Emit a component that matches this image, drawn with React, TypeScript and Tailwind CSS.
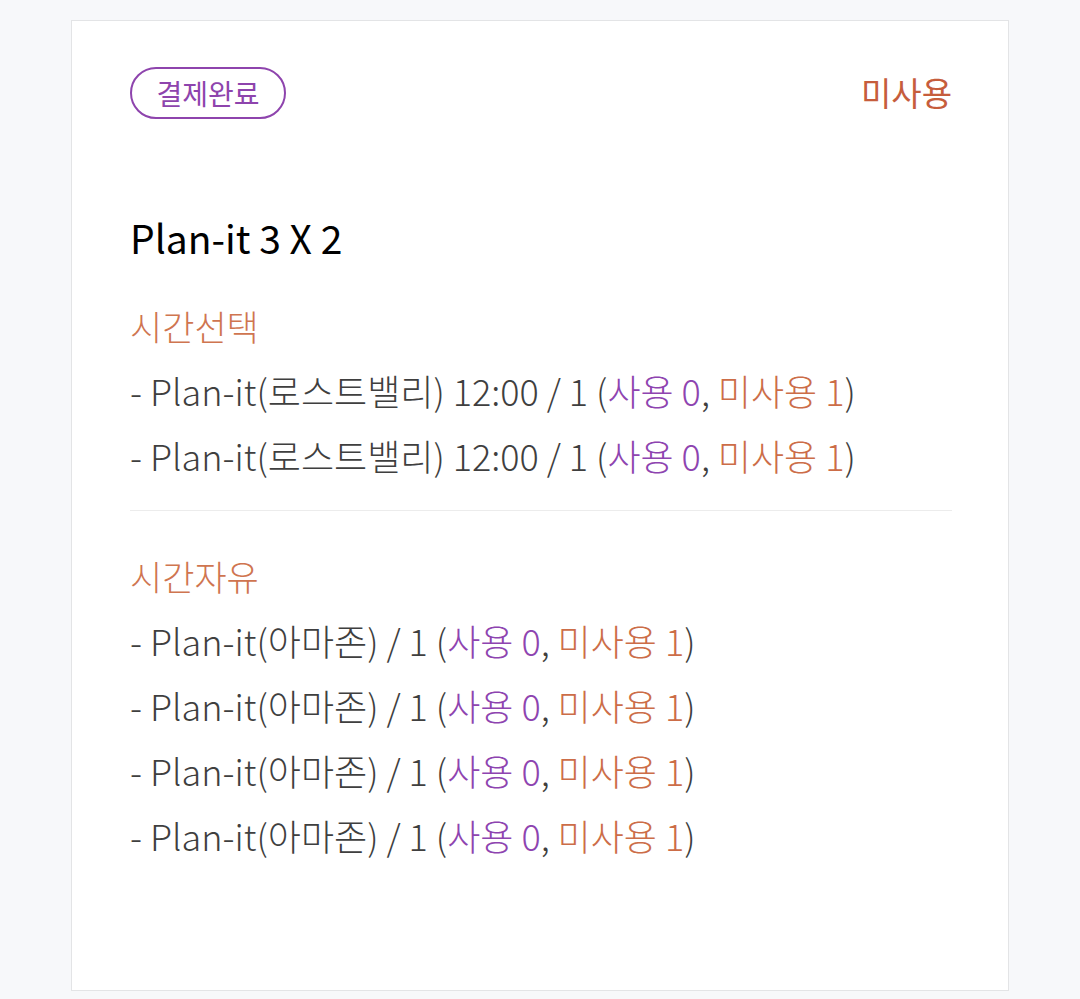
import React from "react";

type Item = { name: string; used: number; unused: number };

const font = { fontFamily: '"Noto Sans CJK KR", "Noto Sans", sans-serif' };

const timeSelect: Item[] = [
    { name: "- Plan-it(로스트밸리) 12:00 / 1", used: 0, unused: 1 },
    { name: "- Plan-it(로스트밸리) 12:00 / 1", used: 0, unused: 1 },
];

const timeFree: Item[] = [
    { name: "- Plan-it(아마존) / 1", used: 0, unused: 1 },
    { name: "- Plan-it(아마존) / 1", used: 0, unused: 1 },
    { name: "- Plan-it(아마존) / 1", used: 0, unused: 1 },
    { name: "- Plan-it(아마존) / 1", used: 0, unused: 1 },
];

const Line = ({ item }: { item: Item }) => (
    <div className="leading-[65px] text-[36px] font-light text-[#3f3f3f] whitespace-nowrap">
        {item.name} (<span className="text-[#8e44b0]">사용 {item.used}</span>,{" "}
        <span className="text-[#cc6d48]">미사용 {item.unused}</span>)
    </div>
);

const Section = ({ title, items }: { title: string; items: Item[] }) => (
    <div>
        <div className="leading-[65px] text-[35px] font-light text-[#cf7550]">{title}</div>
        {items.map((item, i) => (
            <Line item={item} key={i} />
        ))}
    </div>
);

export default function App() {
    return (
        <div className="min-h-[999px] bg-[#f7f8fa] pt-[20px]" style={font}>
            <div className="mx-auto w-[938px] bg-white border border-[#e3e4e6] pt-[46px] pb-[122px] pl-[58px] pr-[56px]">
                <div className="flex items-center justify-between h-[52px]">
                    <div className="h-[52px] w-[156px] rounded-full border-2 border-[#8e44ad] flex items-center justify-center text-[28px] text-[#8e44ad]">
                        결제완료
                    </div>
                    <div className="text-[33px] text-[#c65d3c]">미사용</div>
                </div>
                <div className="mt-[94px] text-[39px] leading-[48px] text-black">Plan-it 3 X 2</div>
                <div className="mt-[32px]">
                    <Section title="시간선택" items={timeSelect} />
                </div>
                <div className="mt-[22px] border-t border-[#ececec]" />
                <div className="mt-[32px]">
                    <Section title="시간자유" items={timeFree} />
                </div>
            </div>
        </div>
    );
}
